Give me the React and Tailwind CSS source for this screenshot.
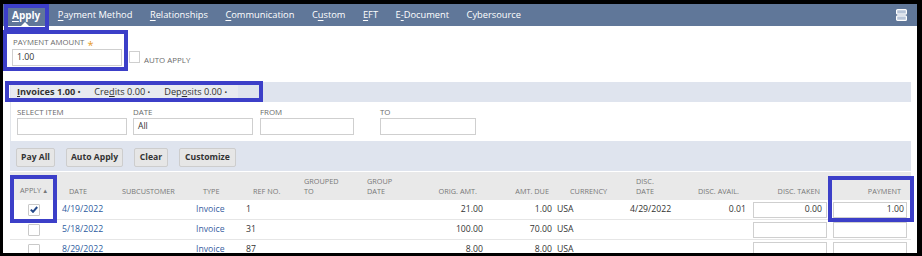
import React from "react";

const tabs = [
  ["", "A", "pply"],
  ["", "P", "ayment Method"],
  ["", "R", "elationships"],
  ["", "C", "ommunication"],
  ["C", "u", "stom"],
  ["", "E", "FT"],
  ["E", "-", "Document"],
  ["Cybersource", "", ""],
];

// column widths/padding, measured from the screenshot
const cols = [
  { key: "apply", w: "w-[48px]", head: "APPLY", hc: "justify-center", vc: "justify-center" },
  { key: "date", w: "w-[57px]", head: "DATE", hc: "pl-[11px]", vc: "pl-[4px]" },
  { key: "sub", w: "w-[75px]", head: "SUBCUSTOMER", hc: "pl-[7px]", vc: "pl-[4px]" },
  { key: "type", w: "w-[52px]", head: "TYPE", hc: "pl-[13px]", vc: "pl-[6px]" },
  { key: "ref", w: "w-[56px]", head: "REF NO.", hc: "pl-[11px]", vc: "pl-[4px]" },
  { key: "grp", w: "w-[62px]", head: "GROUPED\nTO", hc: "pl-[6px]", vc: "pl-[4px]" },
  { key: "gdate", w: "w-[60px]", head: "GROUP\nDATE", hc: "pl-[7px]", vc: "pl-[4px]" },
  { key: "orig", w: "w-[66px]", head: "ORIG. AMT.", hc: "justify-end pr-[9px]", vc: "justify-end pr-[3px]" },
  { key: "due", w: "w-[69px]", head: "AMT. DUE", hc: "justify-end pr-[6px]", vc: "justify-end pr-[3px]" },
  { key: "cur", w: "w-[65px]", head: "CURRENCY", hc: "pl-[15px]", vc: "pl-[2px]" },
  { key: "ddate", w: "w-[60px]", head: "DISC.\nDATE", hc: "pl-[16px]", vc: "pl-[10px]" },
  { key: "avail", w: "w-[70px]", head: "DISC. AVAIL.", hc: "justify-end pr-[11px]", vc: "justify-end pr-[4px]" },
  { key: "taken", w: "w-[80px]", head: "DISC. TAKEN", hc: "justify-end pr-[10px]", vc: "pl-[3px]" },
  { key: "pay", w: "w-[81px]", head: "PAYMENT", hc: "justify-end pr-[10px]", vc: "pl-[3px]" },
];

const rows = [
  { checked: true, date: "4/19/2022", ref: "1", orig: "21.00", due: "1.00", ddate: "4/29/2022", avail: "0.01", taken: "0.00", pay: "1.00" },
  { checked: false, date: "5/18/2022", ref: "31", orig: "100.00", due: "70.00", ddate: "", avail: "", taken: "", pay: "" },
  { checked: false, date: "8/29/2022", ref: "87", orig: "8.00", due: "8.00", ddate: "", avail: "", taken: "", pay: "" },
];

function Box({ className }) {
  return <div className={"absolute border-[4px] border-[#3c3fc8] pointer-events-none " + className} />;
}

function CheckBox({ checked }) {
  return (
    <div className="w-[12px] h-[12px] bg-white border border-[#c9c9c9] rounded-[1px] flex items-center justify-center">
      {checked && (
        <svg width="8" height="7" viewBox="0 0 8 7">
          <path d="M0.8 3.6 L3 5.8 L7.2 1" stroke="#24498a" strokeWidth="2" fill="none" />
        </svg>
      )}
    </div>
  );
}

function Cell({ col, row }) {
  const base = "flex items-center h-full shrink-0 " + col.w + " " + col.vc;
  if (col.key === "apply") return <div className={base}><CheckBox checked={row.checked} /></div>;
  if (col.key === "taken" || col.key === "pay") {
    const val = row[col.key];
    return (
      <div className={base}>
        <div className={"w-[74px] h-[16px] bg-white border border-[#cfcfcf] flex items-center justify-end text-[#333] " + (col.key === "pay" ? "pr-[2px]" : "pr-[4px]")}>
          {val}
        </div>
      </div>
    );
  }
  let text = "";
  let color = "text-[#333]";
  if (col.key === "date") { text = row.date; color = "text-[#2d5b9e]"; }
  if (col.key === "type") { text = "Invoice"; color = "text-[#3a5f9f]"; }
  if (col.key === "ref") text = row.ref;
  if (col.key === "orig") text = row.orig;
  if (col.key === "due") text = row.due;
  if (col.key === "cur") text = "USA";
  if (col.key === "ddate") text = row.ddate;
  if (col.key === "avail") text = row.avail;
  return <div className={base + " " + color}>{text}</div>;
}

function Button({ w, children }) {
  return (
    <div className={"h-[19px] rounded-[2px] bg-[#e6e6e6] border border-[#cdcdcd] flex items-center justify-center font-bold text-[#333] text-[8.6px] " + w}>
      {children}
    </div>
  );
}

function Field({ label, w, ml, value }) {
  return (
    <div className={"flex flex-col " + ml}>
      <div className="h-[16px] flex items-end pb-[1px] text-[7.9px] text-[#6b6b6b] leading-none">{label}</div>
      <div className={"h-[17px] bg-white border border-[#cfcfcf] flex items-center pl-[4px] text-[8.6px] text-[#333] " + w}>{value}</div>
    </div>
  );
}

export default function App() {
  return (
    <div className="relative w-[922px] h-[256px] bg-black pt-[4px] pl-[3px] pr-[5px] pb-[3px] overflow-hidden font-['Open_Sans',sans-serif]">
      <div className="h-full bg-white overflow-hidden flex flex-col">
        {/* tab bar */}
        <div className="relative h-[22px] shrink-0 bg-[#607799] flex items-center pl-[9px] gap-[17.5px] text-white text-[9.3px]">
          {tabs.map(([a, u, b], i) => (
            <span key={i} className={i === 0 ? "font-bold text-[10px]" : ""}>
              {a}
              {u && <span className="underline underline-offset-[1.5px]">{u}</span>}
              {b}
            </span>
          ))}
          <div className="ml-auto mr-[10px]">
            <svg width="11" height="12" viewBox="0 0 11 12">
              <rect x="0.6" y="0.6" width="9.8" height="4.6" rx="1" fill="#b7c4d8" stroke="#fff" strokeWidth="1.2" />
              <rect x="0.6" y="6.8" width="9.8" height="4.6" rx="1" fill="#b7c4d8" stroke="#fff" strokeWidth="1.2" />
            </svg>
          </div>
          <div className="absolute left-[18px] bottom-0 w-0 h-0 border-l-[4px] border-r-[4px] border-b-[4px] border-l-transparent border-r-transparent border-b-white" />
        </div>

        {/* payment amount */}
        <div className="h-[56px] shrink-0 flex items-start pl-[9px] pt-[12px]">
          <div className="flex flex-col">
            <div className="pl-[1px] h-[10px] flex items-center text-[7.8px] text-[#6b6b6b] leading-none">
              PAYMENT AMOUNT <span className="text-[#e69b1e] ml-[3px] text-[11px] leading-none mt-[2px]">*</span>
            </div>
            <div className="mt-[1px] w-[110px] h-[17px] border border-[#cfcfcf] flex items-center pl-[4px] text-[8.8px] text-[#333]">1.00</div>
          </div>
          <div className="flex items-end ml-[7px] mt-[13px]">
            <div className="w-[11px] h-[12px] border border-[#cfcfcf] bg-white" />
            <div className="ml-[4px] text-[7.9px] text-[#6b6b6b] leading-none mb-[-2px]">AUTO APPLY</div>
          </div>
        </div>

        {/* sublist */}
        <div className="ml-[7px] mr-[6px] flex flex-col">
          <div className="relative h-[20px] bg-[#dfe4ee] flex items-center">
            <div className="ml-[1px] h-[16px] w-[227px] bg-[#e8ebf0] flex items-center pl-[6px] gap-[14px] text-[9.2px] text-[#333]">
              <span className="font-bold"><span className="underline">I</span>nvoices 1.00 <span className="text-[7px]">•</span></span>
              <span>Cre<span className="underline">d</span>its 0.00 <span className="text-[7px]">•</span></span>
              <span>Dep<span className="underline">o</span>sits 0.00 <span className="text-[7px]">•</span></span>
            </div>
            <div className="absolute left-[34px] bottom-0 w-0 h-0 border-l-[5px] border-r-[5px] border-b-[4px] border-l-transparent border-r-transparent border-b-white" />
          </div>

          {/* filters */}
          <div className="h-[39px] border-l border-[#e3e6eb] flex items-start pl-[6px]">
            <Field label="SELECT ITEM" w="w-[110px]" ml="" value="" />
            <Field label="DATE" w="w-[120px]" ml="ml-[6px]" value="All" />
            <Field label="FROM" w="w-[94px]" ml="ml-[7px]" value="" />
            <Field label="TO" w="w-[96px]" ml="ml-[26px]" value="" />
          </div>

          {/* buttons */}
          <div className="h-[30px] bg-[#dfe4ee] flex items-start pt-[7px] pl-[6px] gap-[11px]">
            <Button w="w-[39px]">Pay All</Button>
            <Button w="w-[57px]">Auto Apply</Button>
            <Button w="w-[34px]">Clear</Button>
            <Button w="w-[57px]">Customize</Button>
          </div>

          {/* table header */}
          <div className="mt-[1px] h-[28px] bg-[#e9e9e9] flex text-[7.3px] text-[#777] leading-[10px]">
            {cols.map((c) => (
              <div key={c.key} className={"flex items-end pb-[4px] shrink-0 whitespace-pre " + c.w + " " + c.hc}>
                {c.key === "apply" ? (
                  <span>APPLY<span className="text-[6px] ml-[1px]">▲</span></span>
                ) : (
                  c.head
                )}
              </div>
            ))}
          </div>

          {/* rows */}
          {rows.map((r, i) => (
            <div key={i} className="h-[20px] shrink-0 flex border-b border-[#e6e6e6] text-[8.7px]">
              {cols.map((c) => (
                <Cell key={c.key} col={c} row={r} />
              ))}
            </div>
          ))}
        </div>
      </div>

      {/* annotation boxes */}
      <Box className="left-[4px] top-[4px] w-[45px] h-[27px]" />
      <Box className="left-[3px] top-[30px] w-[125px] h-[41px]" />
      <Box className="left-[5px] top-[81px] w-[258px] h-[21px]" />
      <Box className="left-[10px] top-[175px] w-[47px] h-[48px]" />
      <Box className="left-[828px] top-[176px] w-[86px] h-[46px]" />
    </div>
  );
}
